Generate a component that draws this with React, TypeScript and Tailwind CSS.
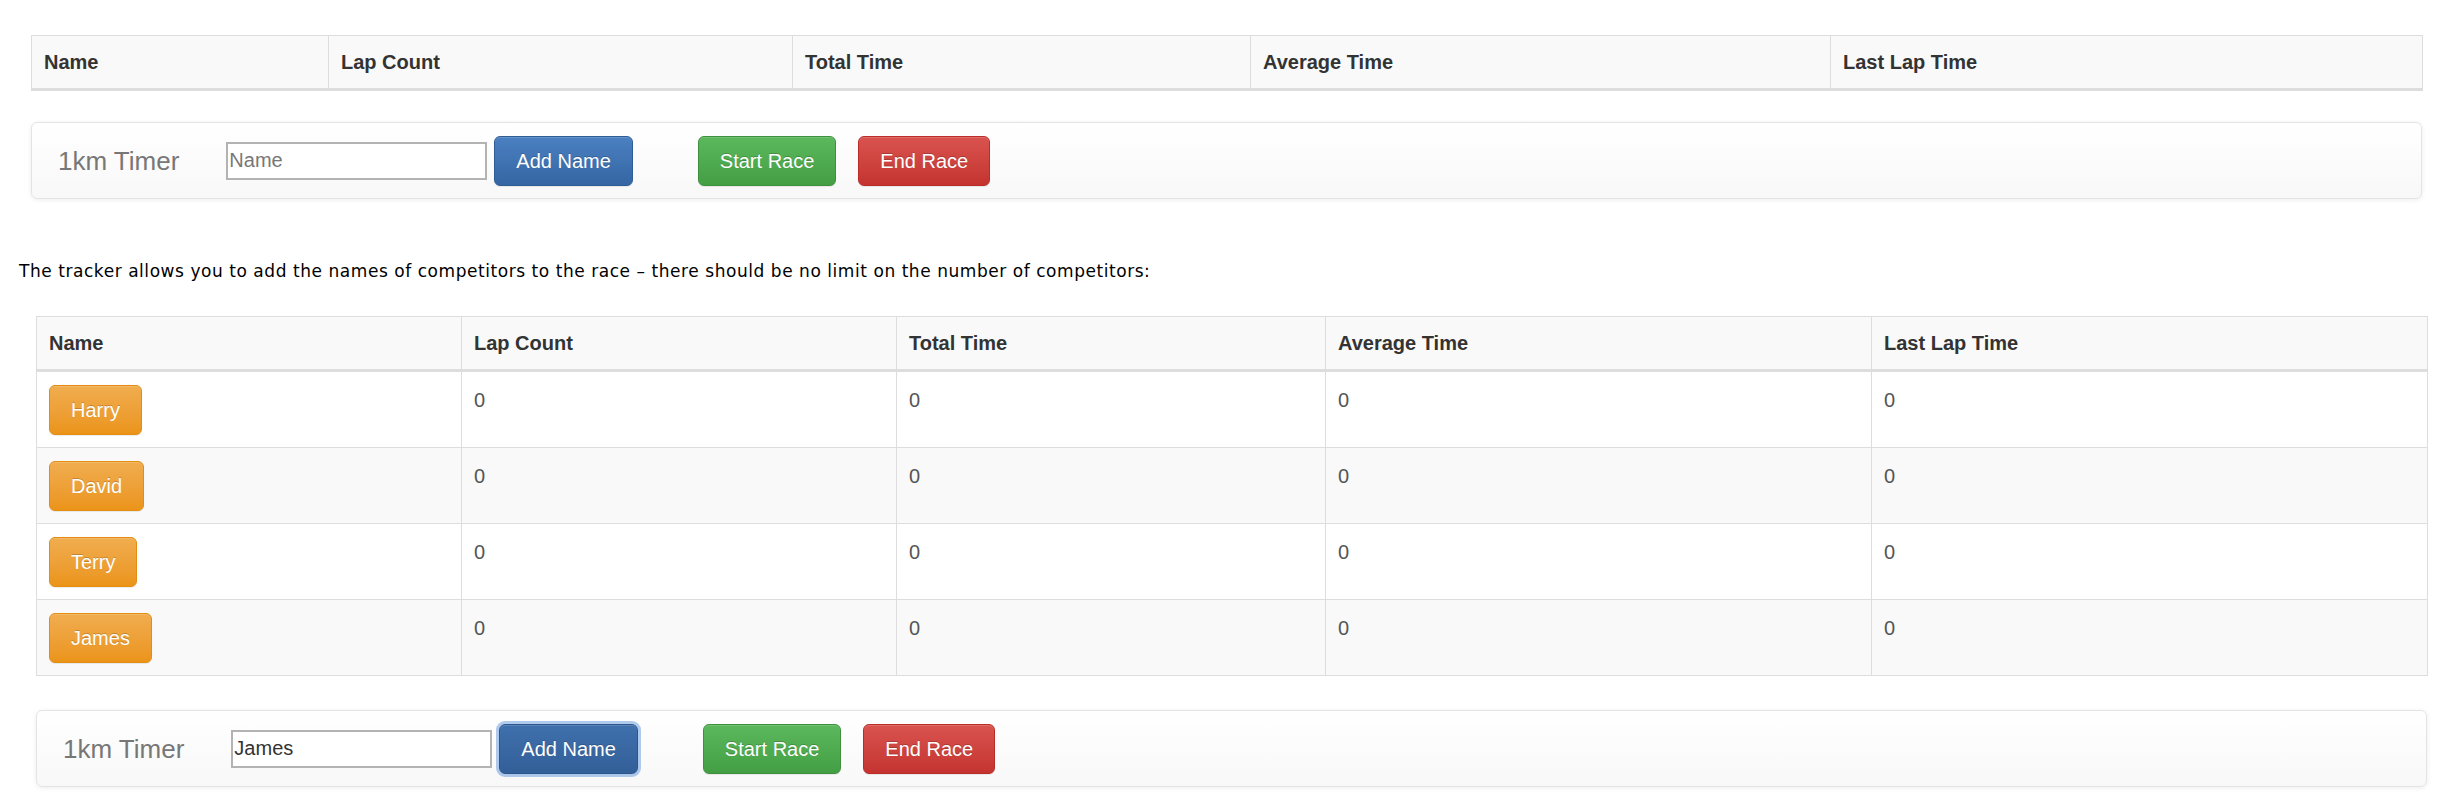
const font = 'font-["Liberation_Sans",Arial,sans-serif]';

const btn =
	'h-[50px] px-[21px] rounded-[6px] border text-[20px] leading-none text-white [text-shadow:0_-1px_0_rgba(0,0,0,0.2)] shadow-[inset_0_1px_0_rgba(255,255,255,0.15),0_1px_1px_rgba(0,0,0,0.075)]';

const primary = 'bg-gradient-to-b from-[#4a80c1] to-[#3566a3] border-[#2e5d96]';
const primaryActive =
	'bg-gradient-to-b from-[#3f70ad] to-[#335f98] border-[#2b578e] ring-[3px] ring-[#8db4e6]/70';
const success = 'bg-gradient-to-b from-[#5cb85c] to-[#449f44] border-[#3e8f3e]';
const danger = 'bg-gradient-to-b from-[#d9534f] to-[#c4332f] border-[#b92c28]';
const warning = 'bg-gradient-to-b from-[#f0ad4e] to-[#eb9418] border-[#e38d13]';

interface Racer {
	name: string;
	laps: number;
	total: number;
	average: number;
	last: number;
}

const racers: Racer[] = [
	{ name: 'Harry', laps: 0, total: 0, average: 0, last: 0 },
	{ name: 'David', laps: 0, total: 0, average: 0, last: 0 },
	{ name: 'Terry', laps: 0, total: 0, average: 0, last: 0 },
	{ name: 'James', laps: 0, total: 0, average: 0, last: 0 },
];

const headings = ['Name', 'Lap Count', 'Total Time', 'Average Time', 'Last Lap Time'];

function RaceTable({ widths, rows }: { widths: string[]; rows: Racer[] }) {
	return (
		<table className="w-[2391px] table-fixed border-collapse">
			<colgroup>
				{widths.map((w, i) => (
					<col key={i} className={w} />
				))}
			</colgroup>
			<tbody>
				<tr className="bg-[#f9f9f9]">
					{headings.map((h) => (
						<th
							key={h}
							className="border border-[#ddd] border-b-[3px] px-3 py-3 text-left text-[20px] leading-[28px] font-bold text-[#333]"
						>
							{h}
						</th>
					))}
				</tr>
				{rows.map((r, i) => (
					<tr key={r.name} className={i % 2 === 1 ? 'bg-[#f9f9f9]' : 'bg-white'}>
						<td className="border border-[#ddd] px-3 pt-[13px] pb-[12px] align-top">
							<button className={`${btn} ${warning}`}>{r.name}</button>
						</td>
						{[r.laps, r.total, r.average, r.last].map((v, j) => (
							<td
								key={j}
								className="border border-[#ddd] px-3 pt-[13px] pb-[12px] align-top text-[20px] leading-[30px] text-[#555]"
							>
								{v}
							</td>
						))}
					</tr>
				))}
			</tbody>
		</table>
	);
}

function TimerBar({ value, focused }: { value: string; focused?: boolean }) {
	return (
		<div className="flex h-[77px] w-[2391px] items-center rounded-[6px] border border-[#e4e4e4] bg-gradient-to-b from-white to-[#f8f8f8] pl-[26px] shadow-[inset_0_1px_0_rgba(255,255,255,0.15),0_1px_5px_rgba(0,0,0,0.075)]">
			<span className="text-[26px] leading-none text-[#777]">1km Timer</span>
			<input
				readOnly
				placeholder="Name"
				value={value}
				className="ml-[47px] h-[38px] w-[261px] border-2 border-[#b3b3b3] bg-white px-[1px] text-[20px] text-[#333] placeholder:text-[#777] outline-none"
			/>
			<button className={`${btn} ml-[7px] ${focused ? primaryActive : primary}`}>Add Name</button>
			<button className={`${btn} ml-[65px] ${success}`}>Start Race</button>
			<button className={`${btn} ml-[22px] ${danger}`}>End Race</button>
		</div>
	);
}

export default function App() {
	return (
		<div className={`${font} flex min-h-[807px] w-[2460px] flex-col bg-white`}>
			<div className="ml-[31px] mt-[35px]">
				<RaceTable widths={['w-[297px]', 'w-[464px]', 'w-[458px]', 'w-[580px]', 'w-[592px]']} rows={[]} />
			</div>
			<div className="ml-[31px] mt-[31px]">
				<TimerBar value="" />
			</div>
			<p className='ml-[19px] mt-[62px] font-["DejaVu_Sans",Verdana,sans-serif] text-[17px] leading-[20px] tracking-[0.55px] text-black'>
				The tracker allows you to add the names of competitors to the race – there should be no limit on the number
				of competitors:
			</p>
			<div className="ml-[36px] mt-[35px]">
				<RaceTable widths={['w-[425px]', 'w-[435px]', 'w-[429px]', 'w-[546px]', 'w-[556px]']} rows={racers} />
			</div>
			<div className="ml-[36px] mt-[34px]">
				<TimerBar value="James" focused />
			</div>
		</div>
	);
}
